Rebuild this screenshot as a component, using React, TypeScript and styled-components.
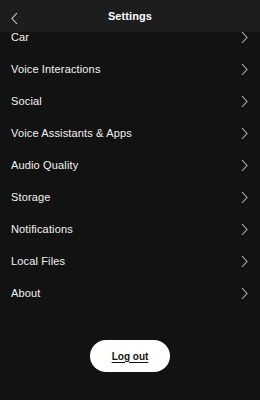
import React from "react";
import styled, { createGlobalStyle } from "styled-components";

const GlobalStyle = createGlobalStyle`
  html, body { margin: 0; padding: 0; background: #121212; }
  body { font-family: "Liberation Sans", Arial, sans-serif; -webkit-font-smoothing: antialiased; }
  * { box-sizing: border-box; }
`;

const Screen = styled.div`
  width: 260px;
  height: 400px;
  overflow: hidden;
  background: #121212;
  display: flex;
  flex-direction: column;
`;

const Header = styled.header`
  position: relative;
  z-index: 1;
  height: 32px;
  flex: none;
  background: #1d1d1d;
  display: flex;
  align-items: center;
  justify-content: center;
`;

const BackButton = styled.button`
  position: absolute;
  left: 8px;
  top: 10px;
  width: 12px;
  height: 16px;
  padding: 0;
  border: none;
  background: none;
  display: flex;
  align-items: center;
  justify-content: center;
  cursor: pointer;
`;

const Title = styled.h1`
  margin: 0;
  color: #fff;
  font-size: 11px;
  font-weight: 700;
  letter-spacing: 0.1px;
`;

const List = styled.ul`
  list-style: none;
  margin: -11px 0 0;
  padding: 0;
`;

const Row = styled.li`
  height: 32px;
  padding: 0 12px 0 11px;
  display: flex;
  align-items: center;
  justify-content: space-between;
  color: #f2f2f2;
  font-size: 11px;
  letter-spacing: 0.15px;
`;

const Footer = styled.div`
  display: flex;
  justify-content: center;
  padding-top: 31px;
`;

const LogoutButton = styled.button`
  width: 80px;
  height: 32px;
  border: none;
  border-radius: 16px;
  background: #fff;
  color: #111;
  font-family: "Liberation Sans", Arial, sans-serif;
  font-size: 10px;
  font-weight: 700;
  text-decoration: underline;
  text-underline-offset: 2px;
  cursor: pointer;
`;

const Chevron = ({ dir }: { dir: "left" | "right" }) =>
  dir === "right" ? (
    <svg width="7" height="13" viewBox="0 0 7 13" fill="none">
      <path d="M1 1l5 5.5L1 12" stroke="#b3b3b3" strokeWidth="1.1" />
    </svg>
  ) : (
    <svg width="8" height="13" viewBox="0 0 8 13" fill="none">
      <path d="M7 1L2 6.5 7 12" stroke="#d0d0d0" strokeWidth="1.1" />
    </svg>
  );

const items = [
  "Car",
  "Voice Interactions",
  "Social",
  "Voice Assistants & Apps",
  "Audio Quality",
  "Storage",
  "Notifications",
  "Local Files",
  "About",
];

export default function App() {
  return (
    <>
      <GlobalStyle />
      <Screen>
        <Header>
          <BackButton aria-label="Back">
            <Chevron dir="left" />
          </BackButton>
          <Title>Settings</Title>
        </Header>
        <List>
          {items.map((label) => (
            <Row key={label}>
              <span>{label}</span>
              <Chevron dir="right" />
            </Row>
          ))}
        </List>
        <Footer>
          <LogoutButton>Log out</LogoutButton>
        </Footer>
      </Screen>
    </>
  );
}
